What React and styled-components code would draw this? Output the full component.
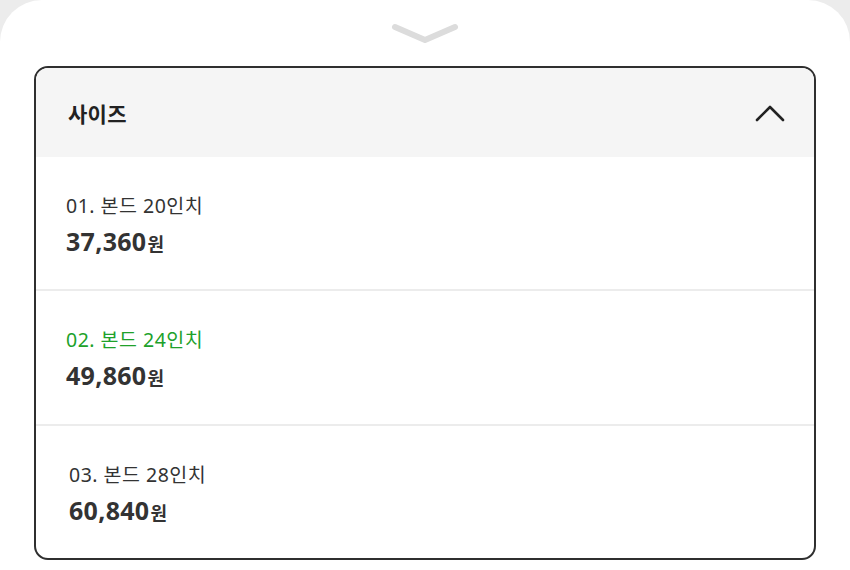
import React from "react";
import styled, { createGlobalStyle } from "styled-components";

const GlobalStyle = createGlobalStyle`
  html, body {
    margin: 0;
    padding: 0;
    background: #ececec;
  }
  body {
    font-family: "Noto Sans", "Noto Sans CJK KR", sans-serif;
  }
`;

const Sheet = styled.div`
  width: 850px;
  height: 570px;
  background: #fff;
  border-radius: 42px 42px 0 0;
  box-sizing: border-box;
  padding: 0 34px;
  overflow: hidden;
`;

const Handle = styled.div`
  height: 66px;
  display: flex;
  justify-content: center;
  align-items: flex-start;
  padding-top: 22px;
  box-sizing: border-box;
`;

const Panel = styled.div`
  border: 2px solid #2f2f2f;
  border-radius: 14px;
  overflow: hidden;
  height: 494px;
  box-sizing: border-box;
  display: flex;
  flex-direction: column;
`;

const Header = styled.div`
  height: 89px;
  flex-shrink: 0;
  background: #f5f5f5;
  display: flex;
  align-items: center;
  justify-content: space-between;
  padding: 0 28px 0 32px;
`;

const Title = styled.span`
  font-family: "Noto Sans CJK KR", sans-serif;
  font-size: 21px;
  font-weight: 700;
  color: #222;
  letter-spacing: 0.3px;
`;

const Option = styled.div`
  flex: 1;
  display: flex;
  flex-direction: column;
  justify-content: center;
  padding-left: ${(p) => (p.$shift ? 33 : 30)}px;
  padding-top: 4px;
  border-top: ${(p) => (p.$first ? "none" : "2px solid #ececec")};
  gap: 6px;
`;

const Label = styled.span`
  font-size: 19.5px;
  font-weight: 400;
  letter-spacing: 0.5px;
  color: ${(p) => (p.$active ? "#20a12a" : "#333")};
  line-height: 28px;
`;

const Price = styled.span`
  font-size: 25px;
  font-weight: 700;
  letter-spacing: 0.3px;
  color: #333;
  line-height: 30px;
`;

const Won = styled.span`
  font-family: "Noto Sans CJK KR", sans-serif;
  font-size: 18px;
  font-weight: 700;
  margin-left: 1px;
`;

const options = [
  { label: "01. 본드 20인치", price: "37,360" },
  { label: "02. 본드 24인치", price: "49,860", active: true },
  { label: "03. 본드 28인치", price: "60,840", shift: true },
];

export default function App() {
  return (
    <>
      <GlobalStyle />
      <Sheet>
        <Handle>
          <svg width="68" height="24" viewBox="0 0 68 24">
            <path
              d="M4 5 L34 18 L64 5"
              fill="none"
              stroke="#dcdcdc"
              strokeWidth="6"
              strokeLinecap="round"
              strokeLinejoin="round"
            />
          </svg>
        </Handle>
        <Panel>
          <Header>
            <Title>사이즈</Title>
            <svg width="32" height="20" viewBox="0 0 32 20">
              <path
                d="M3 17 L16 4 L29 17"
                fill="none"
                stroke="#222"
                strokeWidth="2.6"
                strokeLinecap="round"
                strokeLinejoin="round"
              />
            </svg>
          </Header>
          {options.map((o, i) => (
            <Option key={o.label} $first={i === 0} $shift={o.shift}>
              <Label $active={o.active}>{o.label}</Label>
              <Price>
                {o.price}
                <Won>원</Won>
              </Price>
            </Option>
          ))}
        </Panel>
      </Sheet>
    </>
  );
}
